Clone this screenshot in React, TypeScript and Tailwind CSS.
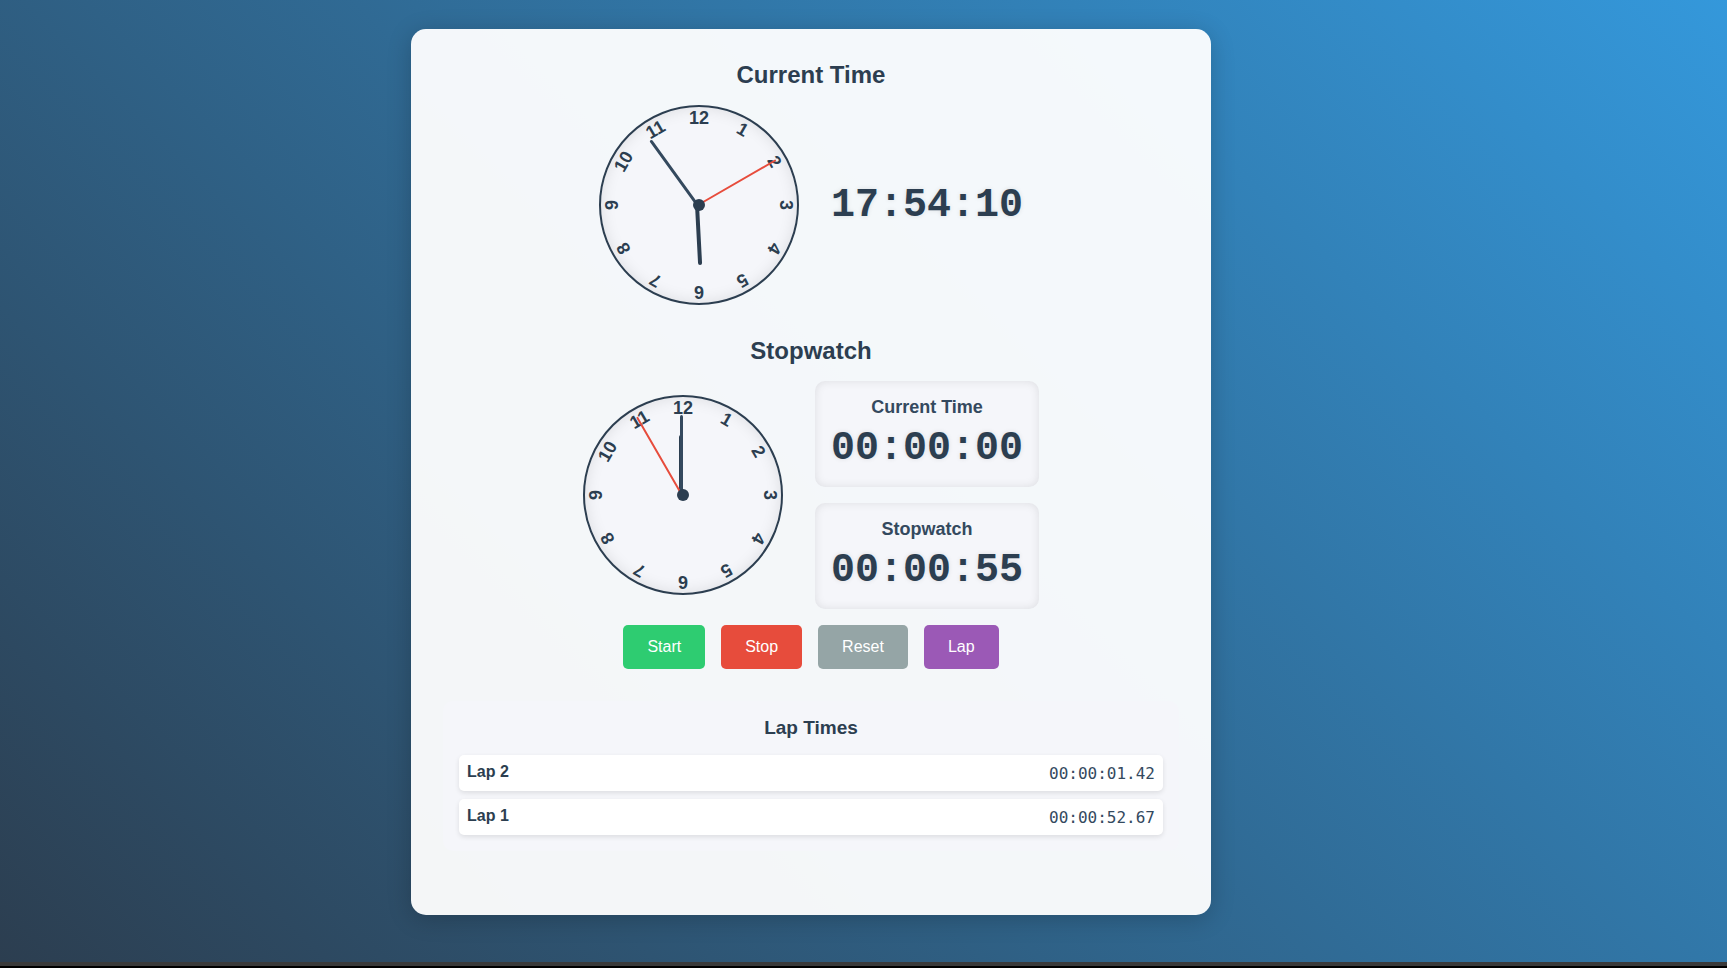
import React from 'react';
import clsx from 'clsx';

interface ClockProps {
  label: string;
  hour: number;
  minute: number;
  second: number;
}

interface Lap {
  id: number;
  time: string;
}

const numerals = [1, 2, 3, 4, 5, 6, 7, 8, 9, 10, 11, 12];

const laps: Lap[] = [
  { id: 2, time: '00:00:01.42' },
  { id: 1, time: '00:00:52.67' },
];

const controls = [
  { name: 'Start', color: 'bg-[#2ecc71]' },
  { name: 'Stop', color: 'bg-[#e74c3c]' },
  { name: 'Reset', color: 'bg-[#95a5a6]' },
  { name: 'Lap', color: 'bg-[#9b59b6]' },
];

// Hands take their angle in degrees, clockwise from 12
function AnalogClock({ label, hour, minute, second }: ClockProps) {
  return (
    <div
      role="img"
      aria-label={label}
      className="relative size-[200px] shrink-0 rounded-full border-2 border-[#2c3e50] bg-[#f5f6fa] shadow-[inset_0_0_15px_rgba(0,0,0,0.1)]"
    >
      {numerals.map((n) => (
        <div
          key={n}
          className="absolute inset-0 text-center text-[18px] leading-[22px] font-bold"
          style={{ transform: `rotate(${n * 30}deg)` }}
        >
          {n}
        </div>
      ))}
      <div
        className="absolute right-1/2 bottom-1/2 h-[60px] w-1 origin-bottom rounded-full bg-[#2c3e50]"
        style={{ transform: `rotate(${hour}deg)` }}
      />
      <div
        className="absolute right-1/2 bottom-1/2 h-20 w-[3px] origin-bottom rounded-full bg-[#34495e]"
        style={{ transform: `rotate(${minute}deg)` }}
      />
      <div
        className="absolute right-1/2 bottom-1/2 h-[90px] w-0.5 origin-bottom rounded-full bg-[#e74c3c]"
        style={{ transform: `rotate(${second}deg)` }}
      />
      <div className="absolute top-1/2 left-1/2 size-3 -translate-x-1/2 -translate-y-1/2 rounded-full bg-[#2c3e50]" />
    </div>
  );
}

function DigitalTime({ value }: { value: string }) {
  return (
    <div className="pt-0.5 font-['Liberation_Mono',monospace] text-[40px] leading-[44px] font-bold [text-shadow:0_0_5px_rgba(0,0,0,0.1)]">
      {value}
    </div>
  );
}

function DisplayBox({ title, value }: { title: string; value: string }) {
  return (
    <div className="rounded-[10px] bg-[#f5f6fa] p-4 text-center shadow-[inset_0_0_10px_rgba(0,0,0,0.1)]">
      <h3 className="mb-2 text-[18px] leading-5 font-bold text-[#34495e]">{title}</h3>
      <DigitalTime value={value} />
    </div>
  );
}

export default function App() {
  return (
    <div className="flex min-h-screen flex-col bg-black font-['Liberation_Sans',Arial,sans-serif] text-[#2c3e50]">
      <main className="flex flex-1 items-start justify-center bg-linear-[45deg,#2c3e50,#3498db] px-4 pt-[29px] pb-8 xl:pr-[121px]">
        <div className="w-full max-w-[800px] rounded-[15px] bg-white/95 p-8 shadow-[0_4px_24px_rgba(0,0,0,0.2)]">
          <section className="mb-8">
            <h2 className="mb-4 text-center text-2xl leading-7 font-bold">Current Time</h2>
            <div className="flex flex-wrap items-center justify-center gap-8">
              <AnalogClock label="Current time clock" hour={177} minute={324} second={60} />
              <DigitalTime value="17:54:10" />
            </div>
          </section>

          <section className="mb-8">
            <h2 className="mb-4 text-center text-2xl leading-7 font-bold">Stopwatch</h2>
            <div className="flex flex-wrap items-center justify-center gap-8">
              <AnalogClock label="Stopwatch clock" hour={0} minute={0} second={330} />
              <div className="flex flex-col gap-4">
                <DisplayBox title="Current Time" value="00:00:00" />
                <DisplayBox title="Stopwatch" value="00:00:55" />
              </div>
            </div>
            <div className="mt-4 flex flex-wrap justify-center gap-4">
              {controls.map((c) => (
                <button
                  key={c.name}
                  type="button"
                  className={clsx('cursor-pointer rounded-[5px] px-6 py-3 text-base leading-5 text-white', c.color)}
                >
                  {c.name}
                </button>
              ))}
            </div>
          </section>

          <section className="mb-8 rounded-[10px] bg-[#f5f6fa] p-4">
            <h3 className="mb-4 text-center text-[19px] leading-[22px] font-bold">Lap Times</h3>
            <ul className="flex flex-col gap-2">
              {laps.map((lap) => (
                <li
                  key={lap.id}
                  className="flex justify-between rounded-[5px] bg-white px-2 pt-2 pb-1.5 shadow-[0_2px_5px_rgba(0,0,0,0.1)]"
                >
                  <span className="text-base leading-[18px] font-bold">Lap {lap.id}</span>
                  <span className="font-['DejaVu_Sans_Mono',monospace] text-base leading-[22px] text-[#34495e]">
                    {lap.time}
                  </span>
                </li>
              ))}
            </ul>
          </section>
        </div>
      </main>
      <div className="h-1 bg-[#3a3a3a]" />
      <div className="h-0.5 bg-black" />
    </div>
  );
}
